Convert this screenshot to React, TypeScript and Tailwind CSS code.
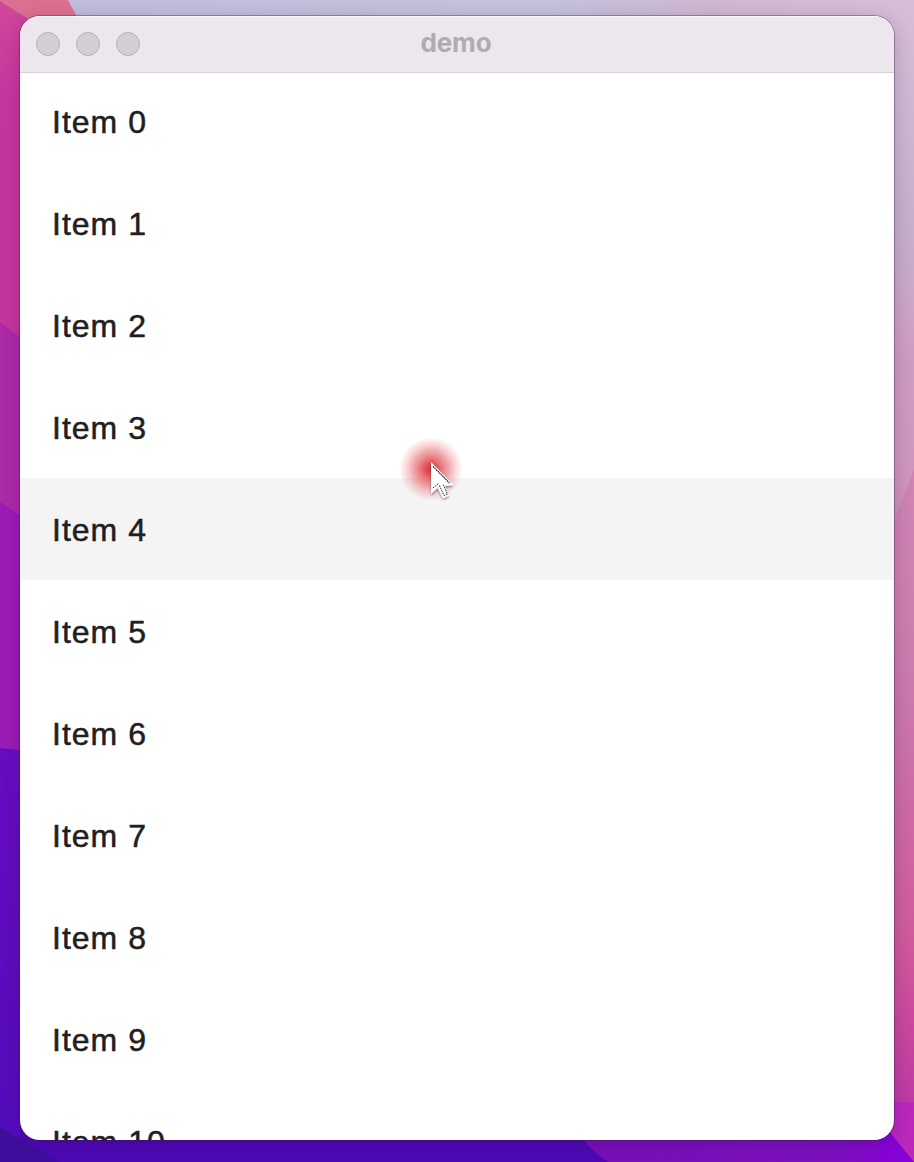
const ITEMS = Array.from({ length: 11 }, (_, i) => `Item ${i}`);
const HOVERED = 4;

function Wallpaper() {
  return (
    <svg className="absolute inset-0 h-full w-full" viewBox="0 0 914 1162" preserveAspectRatio="none" aria-hidden="true">
      <defs>
        <linearGradient id="left" gradientUnits="userSpaceOnUse" x1="0" y1="0" x2="0" y2="340">
          <stop offset="0" stopColor="#d0489a" />
          <stop offset="0.3" stopColor="#c6359f" />
          <stop offset="1" stopColor="#c5359e" />
        </linearGradient>
        <linearGradient id="sky" x1="0" y1="0" x2="1" y2="0">
          <stop offset="0" stopColor="#bfbddb" />
          <stop offset="0.6" stopColor="#c4c2dc" />
          <stop offset="0.78" stopColor="#d0b8d2" />
          <stop offset="1" stopColor="#d8bfd6" />
        </linearGradient>
        <linearGradient id="right" gradientUnits="userSpaceOnUse" x1="0" y1="0" x2="0" y2="1104">
          <stop offset="0" stopColor="#d6bed6" />
          <stop offset="0.2" stopColor="#c5b1cc" />
          <stop offset="0.26" stopColor="#caa9ca" />
          <stop offset="0.32" stopColor="#cf9dc2" />
          <stop offset="0.43" stopColor="#cf96be" />
          <stop offset="0.55" stopColor="#ca85b0" />
          <stop offset="0.72" stopColor="#cd6ca6" />
          <stop offset="0.85" stopColor="#d05b9b" />
          <stop offset="0.93" stopColor="#cb479f" />
          <stop offset="1" stopColor="#be3ba4" />
        </linearGradient>
        <linearGradient id="ridge" x1="0" y1="0" x2="0" y2="1">
          <stop offset="0" stopColor="#d076ad" stopOpacity="0.6" />
          <stop offset="1" stopColor="#d076ad" stopOpacity="0" />
        </linearGradient>
        <linearGradient id="bottom" x1="0" y1="0" x2="1" y2="0">
          <stop offset="0" stopColor="#780fb7" />
          <stop offset="0.75" stopColor="#7b10bd" />
          <stop offset="1" stopColor="#8603d6" />
        </linearGradient>
        <linearGradient id="deep" x1="0" y1="0" x2="0" y2="1">
          <stop offset="0" stopColor="#680cc2" />
          <stop offset="1" stopColor="#520bbc" />
        </linearGradient>
      </defs>
      <rect width="914" height="1162" fill="url(#sky)" />
      <path d="M0 0H68L86 34L28 40L0 20Z" fill="#dc7090" />
      <path d="M0 1L36 24V360H0Z" fill="url(#left)" />
      <path d="M0 322L36 349V530H0Z" fill="#ad2aa8" />
      <path d="M0 502L36 526V760H0Z" fill="#9b1bb7" />
      <path d="M0 748L36 752V1162H0Z" fill="url(#deep)" />
      <path d="M20 1120H640V1162H20Z" fill="#4d09b3" />
      <path d="M0 1127L60 1162H0Z" fill="#3f0e9c" />
      <path d="M567 1120H914V1162H608Q594 1153 584 1140Z" fill="url(#bottom)" />
      <path d="M880 0H914V1162H880Z" fill="url(#right)" />
      <path d="M914 469Q900 508 890 530V780H914Z" fill="url(#ridge)" />
      <path d="M880 1120L914 1162V1102H880Z" fill="#ba28bc" />
      <path d="M880 1120L914 1162H880Z" fill="#8503d5" />
    </svg>
  );
}

function Pointer() {
  return (
    <svg className="pointer-events-none absolute left-[380px] top-[421px] h-[66px] w-[66px]" viewBox="400 437 66 66" aria-hidden="true">
      <defs>
        <radialGradient id="tap">
          <stop offset="0" stopColor="#dc3038" />
          <stop offset="0.2" stopColor="#e0434a" stopOpacity="0.9" />
          <stop offset="0.6" stopColor="#e45b60" stopOpacity="0.5" />
          <stop offset="1" stopColor="#f08a8e" stopOpacity="0.06" />
        </radialGradient>
        <filter id="soft" x="-50%" y="-50%" width="200%" height="200%">
          <feDropShadow dx="0" dy="1.5" stdDeviation="1.2" floodOpacity="0.45" />
        </filter>
      </defs>
      <circle cx="431" cy="469" r="31" fill="url(#tap)" />
      <path d="M431 462V494L437.5 488L443 498.5L449 495.5L445 486L453.5 485Z" fill="#fff" filter="url(#soft)" />
      <path d="M433 466.5L449.5 483" fill="none" stroke="#222" strokeWidth="1.2" strokeDasharray="1.6 0.6" />
      <path d="M433 488L438.5 483.5M439.5 485.5L444 495.5L447.5 494L443 484" fill="none" stroke="#222" strokeWidth="1" strokeDasharray="1.6 1" />
    </svg>
  );
}

function TitleBar() {
  return (
    <header className="relative z-10 flex h-[57px] shrink-0 items-center justify-center border-b border-[#d5d2d5] bg-[#ece7ed] shadow-[inset_0_1px_0_#faf8fa]">
      <div className="absolute left-4 top-4 flex gap-4">
        {["close", "minimize", "zoom"].map((name) => (
          <button key={name} aria-label={name} className="size-6 rounded-full border border-[#b5b1b6] bg-[#d2ced4]" />
        ))}
      </div>
      <h1 className="pb-[3px] pr-0.5 font-[Inter,sans-serif] text-[26px] leading-8 font-bold tracking-[-0.1px] text-[#afabb0]">demo</h1>
    </header>
  );
}

export default function App() {
  return (
    <div className="relative h-[1162px] w-[914px] overflow-hidden px-5 pt-4 pb-[22px]">
      <Wallpaper />
      <main className="relative flex h-[1124px] flex-col overflow-hidden rounded-[20px] bg-white shadow-[0_0_0_1px_rgba(60,20,80,0.35),0_3px_18px_rgba(35,0,60,0.22)]">
        <TitleBar />
        <ul className="-mt-[3px]">
          {ITEMS.map((label, i) => (
            <li
              key={label}
              className={`flex h-[102px] items-center pt-0.5 pl-8 font-['Liberation_Sans',Arial,sans-serif] text-[32px] leading-10 tracking-[1px] text-[#202020] [-webkit-text-stroke:0.5px_#202020] ${i === HOVERED ? "bg-[#f4f4f4]" : ""}`}
            >
              {label}
            </li>
          ))}
        </ul>
        <Pointer />
      </main>
    </div>
  );
}
